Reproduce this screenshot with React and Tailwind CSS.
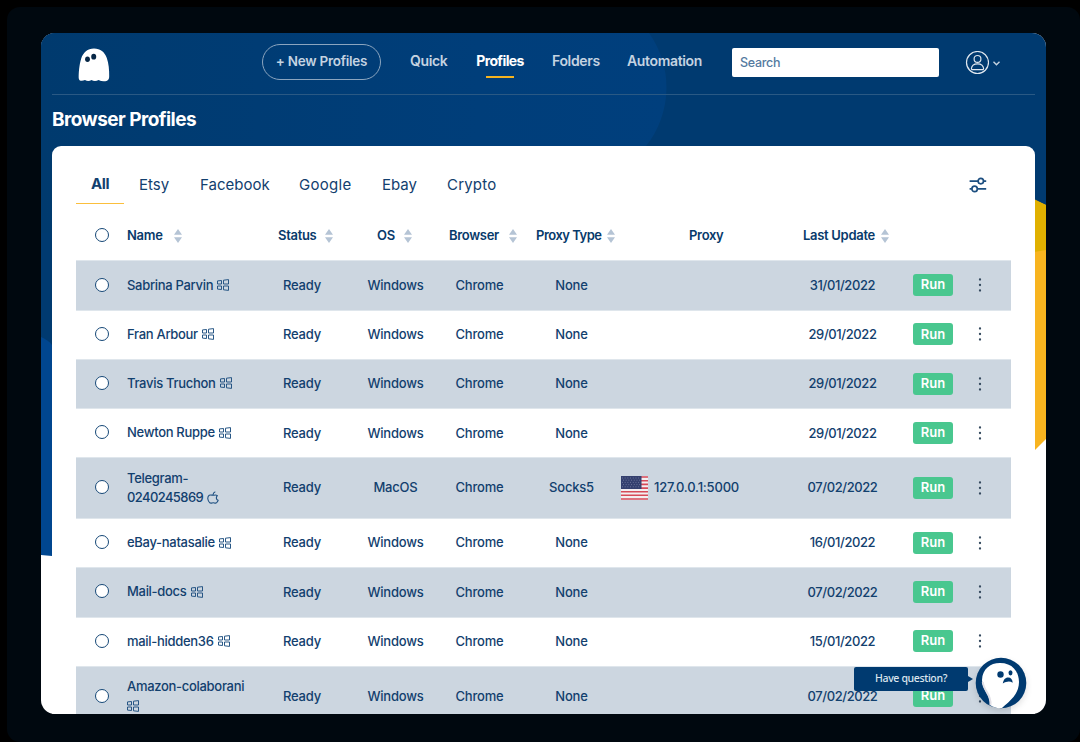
import React, { useState } from 'react';
import clsx from 'clsx';

const TABS = [
    { name: 'Etsy', className: 'w-[61px]' },
    { name: 'Facebook', className: 'w-[99px]' },
    { name: 'Google', className: 'w-[83px] tracking-[0.3px]' },
    { name: 'Ebay', className: 'w-[65px]' },
    { name: 'Crypto', className: 'w-[52px] tracking-[0.2px]' },
];

const COLUMNS = [
    { name: 'Name', className: 'w-[55px]' },
    { name: 'Status', className: 'w-[55px]' },
    { name: 'OS', className: 'w-[35px]' },
    { name: 'Browser', className: 'w-[68px]' },
    { name: 'Proxy Type', className: 'w-[79px] tracking-[-0.5px]' },
    { name: 'Proxy', noSort: true },
    { name: 'Last Update', className: 'w-[86px]' },
];

const PROFILES = [
    { id: 1, name: 'Sabrina Parvin', os: 'Windows', type: 'None', date: '31/01/2022' },
    { id: 2, name: 'Fran Arbour', os: 'Windows', type: 'None', date: '29/01/2022' },
    { id: 3, name: 'Travis Truchon', os: 'Windows', type: 'None', date: '29/01/2022' },
    { id: 4, name: 'Newton Ruppe', os: 'Windows', type: 'None', date: '29/01/2022' },
    { id: 5, name: 'Telegram-', rest: '0240245869', os: 'MacOS', type: 'Socks5', proxy: '127.0.0.1:5000', date: '07/02/2022' },
    { id: 6, name: 'eBay-natasalie', os: 'Windows', type: 'None', date: '16/01/2022' },
    { id: 7, name: 'Mail-docs', os: 'Windows', type: 'None', date: '07/02/2022' },
    { id: 8, name: 'mail-hidden36', os: 'Windows', type: 'None', date: '15/01/2022' },
    { id: 9, name: 'Amazon-colaborani', rest: '', os: 'Windows', type: 'None', date: '07/02/2022' },
];

const Backdrop = () => (
    <svg className="absolute inset-0" width="1005" height="681" viewBox="0 0 1005 681">
        <defs>
            <linearGradient id="glow" x1="0" x2="1" y1="0" y2="0">
                <stop offset="0" stopColor="#003a6e" />
                <stop offset="0.7" stopColor="#003e7a" />
                <stop offset="1" stopColor="#003f7d" />
            </linearGradient>
        </defs>
        <rect width="1005" height="681" fill="#fff" />
        <path d="M0 0H1005V300H993V523L0 522Z" fill="#003a70" />
        <path d="M0 0H608A94 94 0 0 1 605 113V200H0Z" fill="url(#glow)" />
        <path d="M0 304C4 306 8 308 11 312V523L0 522Z" fill="#00468f" />
        <path d="M993 167L1005 172V406L993 418Z" fill="#f8b41f" />
        <path d="M993 166L1005 172V217L993 219Z" fill="#e0b000" />
    </svg>
);

const Logo = () => (
    <svg width="32" height="34" viewBox="0 0 32 34">
        <path
            d="M16 .5C9.500 .5 5.200 4.500 3.200 10.500C1.200 17 .6 25 .7 30C.8 33.200 4 33.400 7 32C9 33.300 11.500 33.300 13.500 32C15.500 33.300 18.500 33.300 20.500 32C23 33.300 26 33.600 28.500 32.900C30.500 32.300 31.200 31 31.200 28C31.300 22 30.700 15.500 28.800 10C26.600 4 22.500 .5 16 .5Z"
            fill="#fff"
        />
        <ellipse cx="9.500" cy="11.200" rx="2.400" ry="2.700" fill="#072746" />
        <ellipse cx="15.700" cy="8.700" rx="2.500" ry="2.900" fill="#072746" />
    </svg>
);

const UserIcon = () => (
    <svg width="24" height="24" viewBox="0 0 24 24" fill="none" stroke="#dfe7ef" strokeWidth="1.200">
        <circle cx="12.500" cy="11.500" r="11" />
        <circle cx="12.500" cy="7.900" r="3.400" />
        <path d="M6.400 17.800C6.600 14.500 9 12.800 12.500 12.800S18.400 14.500 18.600 17.800C18.600 18.500 18.200 18.600 17.700 18.600H7.300C6.800 18.600 6.400 18.500 6.400 17.800Z" />
    </svg>
);

const FilterIcon = () => (
    <svg width="18" height="16" viewBox="0 0 18 16" fill="none" stroke="#1d4f80" strokeWidth="1.700">
        <path d="M.6 4.100H9M14.700 4.100H17.200M.6 11.900H2.800M8.500 11.900H17.200" />
        <circle cx="11.800" cy="4.100" r="2.700" />
        <circle cx="5.600" cy="11.900" r="2.700" />
    </svg>
);

const SortIcon = () => (
    <svg width="8" height="14" viewBox="0 0 8 14" fill="#b5c4d5">
        <path d="M4 0L8 5.800H0ZM4 14L0 8.200H8Z" />
    </svg>
);

const WindowsIcon = () => (
    <svg className="inline-block" width="13" height="12" viewBox="0 0 13 12" fill="none" stroke="#1d4f80" strokeWidth=".95">
        <path d="M.5 1.900L4.500 1.500V5H.5ZM6.500 1.200L11.500 .6V5H6.500ZM.5 7H4.500V10.500L.5 10.100ZM6.500 7H11.500V11.400L6.500 10.800Z" />
    </svg>
);

const AppleIcon = () => (
    <svg className="inline-block" width="12" height="13" viewBox="0 0 12 13" fill="none" stroke="#1d4f80" strokeWidth="1.100">
        <path d="M10.300 4.600C8.800 3.500 7.300 4.300 6.200 4.300S3.700 3.500 2.200 4.300C-.2 5.900 .8 10.100 2.800 11.800C4.100 12.700 5 11.700 6.200 11.700S8.500 12.700 9.600 11.700C10.300 11 10.900 10.200 11.100 9.300C9.100 8.500 8.800 6.400 10.300 4.600Z" />
        <path d="M6 4C6 2.500 6.600 1.300 8.300 .7" />
    </svg>
);

const Flag = () => (
    <svg width="27" height="24" viewBox="0 0 27 24">
        <rect width="27" height="24" fill="#f3eff1" />
        <path d="M0 1H27M0 4.700H27M0 8.400H27M0 12.100H27M0 15.700H27M0 19.300H27M0 23H27" stroke="#d64a58" strokeWidth="1.600" />
        <rect width="20.500" height="13" fill="#34406f" />
        <path d="M1 2H20M2 4.200H20M1 6.400H20M2 8.600H20M1 10.800H20" stroke="#7f87a8" strokeWidth=".8" strokeDasharray=".9 1.800" />
    </svg>
);

const Radio = ({ checked, onClick }) => (
    <button
        onClick={onClick}
        className={clsx('w-[14px] h-[14px] rounded-full border border-[#164877]', checked ? 'bg-[#164877]' : 'bg-white')}
    />
);

const ProfileRow = ({ profile, selected, onSelect }) => {
    const tall = profile.rest !== undefined;
    const Icon = profile.os === 'MacOS' ? AppleIcon : WindowsIcon;

    return (
        <div
            className={clsx(
                'grid grid-cols-[51px_123px_104px_83px_85px_99px_170px_103px_117px] items-center text-center text-[13px] tracking-[-0.2px] text-[#12406e] border-t border-[#dfe6ec]',
                profile.id % 2 ? 'bg-[#ccd6e0]' : 'bg-white',
                tall ? 'h-[60.7px]' : 'h-[49.25px]'
            )}
        >
            <div className="flex justify-center pb-[2px]">
                <Radio checked={selected} onClick={onSelect} />
            </div>
            <div className="pb-px text-left leading-[19px] tracking-[-0.3px] whitespace-nowrap">
                <span>{profile.name}</span>
                {tall && <br />}
                <span className="tracking-[-0.6px]">{profile.rest}</span>
                <span className={clsx('relative -top-px', profile.rest !== '' && 'ml-1')}>
                    <Icon />
                </span>
            </div>
            <div>Ready</div>
            <div>{profile.os}</div>
            <div>Chrome</div>
            <div>{profile.type}</div>
            <div className="flex items-center gap-[6px]">
                {profile.proxy && <Flag />}
                <span>{profile.proxy}</span>
            </div>
            <div className="tracking-[-0.4px]">{profile.date}</div>
            <div className="flex items-center pl-[19px] pb-px">
                <button className="w-10 h-[22px] rounded-[3px] bg-[#49c78f] text-white text-[13px] tracking-normal font-semibold">
                    Run
                </button>
                <svg className="ml-[25px]" width="4" height="14" viewBox="0 0 4 14" fill="#34495e">
                    <circle cx="2" cy="1.500" r="1.150" />
                    <circle cx="2" cy="7" r="1.150" />
                    <circle cx="2" cy="12.500" r="1.150" />
                </svg>
            </div>
        </div>
    );
};

const ChatWidget = () => (
    <div className="absolute left-[854px] top-[657px] flex items-start">
        <div className="mt-[10px] w-[114px] h-6 rounded-[2px] bg-[#003a70] flex items-center justify-center text-[10.5px] font-['Noto_Sans'] tracking-[-0.35px] text-[#dce5ee]">
            Have question?
        </div>
        <svg className="mt-[19px]" width="5" height="6" viewBox="0 0 5 6">
            <path d="M0 0L5 3L0 6Z" fill="#003a70" />
        </svg>
        <svg className="ml-[2px] drop-shadow-md" width="52" height="52" viewBox="0 0 52 52">
            <circle cx="26" cy="26" r="25.300" fill="#003a70" />
            <path d="M7 23C7.500 12 15 6 25 6C37 6 44 14 44 25C44 37 35 44 27 51C23 51.500 18 50.500 15 48C15.500 37 7 33 7 23Z" fill="#fff" />
            <path d="M7.800 25C8.500 34 16.500 37 15.500 48" fill="none" stroke="#e2e0e7" strokeWidth="2" />
            <circle cx="25.500" cy="17.500" r="3.200" fill="#003a70" />
            <ellipse cx="35.500" cy="15.800" rx="2" ry="2.600" fill="#003a70" />
            <path d="M27.800 26.500C28.500 22 31 20.500 33.200 20.500C36 20.500 37.500 22.500 37.700 25.700C34.500 23.800 31.500 24.500 27.800 26.500Z" fill="#003a70" />
        </svg>
    </div>
);

const App = () => {
    const [selected, setSelected] = useState([]);

    const toggle = (id) => {
        setSelected(selected.includes(id) ? selected.filter((s) => s !== id) : [...selected, id]);
    };

    const toggleAll = () => {
        setSelected(selected.length === PROFILES.length ? [] : PROFILES.map((p) => p.id));
    };

    return (
        <div className="w-[1080px] h-[742px] overflow-hidden bg-black pt-[7px] pl-[7px] font-[Inter,sans-serif] font-medium">
            <div className="w-[1073px] h-[735px] rounded-[13px] bg-[#00080f] pt-[26px] pl-[34px]">
                <div className="relative w-[1005px] h-[681px] rounded-[14px] overflow-hidden px-[11px]">
                    <Backdrop />
                    <div className="relative w-[983px]">
                        <header className="flex items-start h-[62px] border-b border-[#2a5984] text-sm text-[#c5d3e1] font-semibold whitespace-nowrap">
                            <div className="w-[210px] pl-[26px] pt-[15px]">
                                <Logo />
                            </div>
                            <button className="mt-[11px] w-[119px] h-9 rounded-full border border-[#8ba5bf] text-[13.5px] tracking-[-0.25px]">
                                + New Profiles
                            </button>
                            <nav className="grid grid-cols-[66px_76px_75px_105px] ml-[29px] pt-[18px] leading-5 tracking-[-0.35px]">
                                <a>Quick</a>
                                <a className="flex flex-col items-center w-[48px] text-white font-bold tracking-[-0.6px]">
                                    Profiles
                                    <span className="mt-[5px] w-[28px] h-[2px] bg-[#f5b31f]" />
                                </a>
                                <a>Folders</a>
                                <a>Automation</a>
                            </nav>
                            <input
                                placeholder="Search"
                                className="mt-[15px] w-[207px] h-[29px] rounded-[2px] bg-white px-2 pb-px text-[12.5px] font-medium placeholder:text-[#557a9f] tracking-[-0.3px]"
                            />
                            <div className="flex items-center gap-1 ml-[26px] mt-[18px]">
                                <UserIcon />
                                <svg width="7" height="5" viewBox="0 0 7 5" fill="none" stroke="#c5d3e1" strokeWidth="1.400">
                                    <path d="M.5 .7L3.500 3.700L6.500 .7" />
                                </svg>
                            </div>
                        </header>

                        <h1 className="h-[51px] pt-[11px] text-[19px] leading-[28px] font-bold text-white tracking-[-0.55px] whitespace-nowrap">
                            Browser Profiles
                        </h1>

                        <main className="h-[568px] rounded-t-[9px] bg-white pt-[19px] px-6">
                            <div className="flex h-[39px] text-[15px] leading-[39px] text-[#12406e] font-normal whitespace-nowrap">
                                <div className="flex flex-col w-12 mr-[15px] text-center font-bold">
                                    <span className="h-[38px] leading-[38px] tracking-[-0.4px]">All</span>
                                    <span className="h-px bg-[#fbbf3c]" />
                                </div>
                                {TABS.map((tab) => (
                                    <div key={tab.name} className={tab.className}>
                                        {tab.name}
                                    </div>
                                ))}
                                <div className="ml-auto mr-[24px] pt-[12px]">
                                    <FilterIcon />
                                </div>
                            </div>

                            <div className="grid grid-cols-[51px_151px_99px_72px_87px_153px_114px_1fr] items-center h-[56.4px] pt-[8px] text-[13px] font-semibold text-[#083a6b] tracking-[-0.3px] whitespace-nowrap">
                                <div className="flex justify-center pb-[2px]">
                                    <Radio checked={selected.length === PROFILES.length} onClick={toggleAll} />
                                </div>
                                {COLUMNS.map((col) => (
                                    <div key={col.name} className={clsx('flex items-center justify-between', col.className)}>
                                        {col.name}
                                        {!col.noSort && <SortIcon />}
                                    </div>
                                ))}
                            </div>

                            {PROFILES.map((profile) => (
                                <ProfileRow
                                    key={profile.id}
                                    profile={profile}
                                    selected={selected.includes(profile.id)}
                                    onSelect={() => toggle(profile.id)}
                                />
                            ))}
                        </main>
                    </div>
                </div>
            </div>
            <ChatWidget />
        </div>
    );
};

export default App;
